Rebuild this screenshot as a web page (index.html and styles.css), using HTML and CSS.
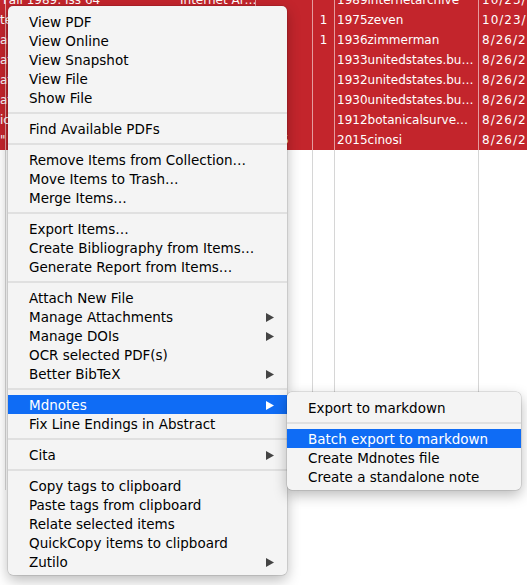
FILE: index.html
```html
<!DOCTYPE html>
<html>
<head>
<meta charset="utf-8">
<link rel="stylesheet" href="styles.css">
</head>
<body>
<div class="table">
  <div class="row sel"><div class="c ca">Fall 1989: Iss 64</div><div class="c cb"></div><div class="c cc">Internet Ar…</div><div class="c cd"></div><div class="c ce"></div><div class="c cf">1989internetarchive</div><div class="c cg">10/23/2020</div></div>
  <div class="row sel"><div class="c ca">tenth</div><div class="c cb"></div><div class="c cc"></div><div class="c cd"></div><div class="c ce">1</div><div class="c cf">1975zeven</div><div class="c cg">10/23/2020</div></div>
  <div class="row sel"><div class="c ca">arbor</div><div class="c cb"></div><div class="c cc"></div><div class="c cd"></div><div class="c ce">1</div><div class="c cf">1936zimmerman</div><div class="c cg">8/26/2020</div></div>
  <div class="row sel"><div class="c ca">atlas</div><div class="c cb"></div><div class="c cc"></div><div class="c cd"></div><div class="c ce"></div><div class="c cf">1933unitedstates.bu…</div><div class="c cg">8/26/2020</div></div>
  <div class="row sel"><div class="c ca">atlas</div><div class="c cb"></div><div class="c cc"></div><div class="c cd"></div><div class="c ce"></div><div class="c cf">1932unitedstates.bu…</div><div class="c cg">8/26/2020</div></div>
  <div class="row sel"><div class="c ca">atlas</div><div class="c cb"></div><div class="c cc"></div><div class="c cd"></div><div class="c ce"></div><div class="c cf">1930unitedstates.bu…</div><div class="c cg">8/26/2020</div></div>
  <div class="row sel"><div class="c ca">icones</div><div class="c cb"></div><div class="c cc"></div><div class="c cd"></div><div class="c ce"></div><div class="c cf">1912botanicalsurve…</div><div class="c cg">8/26/2020</div></div>
  <div class="row sel"><div class="c ca">"</div><div class="c cb"></div><div class="c cc"></div><div class="c cd tail">2015</div><div class="c ce"></div><div class="c cf">2015cinosi</div><div class="c cg">8/26/2020</div></div>
  <div class="row"><div class="c ca"></div><div class="c cb"></div><div class="c cc"></div><div class="c cd"></div><div class="c ce"></div><div class="c cf"></div><div class="c cg"></div></div>
  <div class="row"><div class="c ca"></div><div class="c cb"></div><div class="c cc"></div><div class="c cd"></div><div class="c ce"></div><div class="c cf"></div><div class="c cg"></div></div>
  <div class="row"><div class="c ca"></div><div class="c cb"></div><div class="c cc"></div><div class="c cd"></div><div class="c ce"></div><div class="c cf"></div><div class="c cg"></div></div>
  <div class="row"><div class="c ca"></div><div class="c cb"></div><div class="c cc"></div><div class="c cd"></div><div class="c ce"></div><div class="c cf"></div><div class="c cg"></div></div>
  <div class="row"><div class="c ca"></div><div class="c cb"></div><div class="c cc"></div><div class="c cd"></div><div class="c ce"></div><div class="c cf"></div><div class="c cg"></div></div>
  <div class="row"><div class="c ca"></div><div class="c cb"></div><div class="c cc"></div><div class="c cd"></div><div class="c ce"></div><div class="c cf"></div><div class="c cg"></div></div>
  <div class="row"><div class="c ca"></div><div class="c cb"></div><div class="c cc"></div><div class="c cd"></div><div class="c ce"></div><div class="c cf"></div><div class="c cg"></div></div>
  <div class="row"><div class="c ca"></div><div class="c cb"></div><div class="c cc"></div><div class="c cd"></div><div class="c ce"></div><div class="c cf"></div><div class="c cg"></div></div>
  <div class="row"><div class="c ca"></div><div class="c cb"></div><div class="c cc"></div><div class="c cd"></div><div class="c ce"></div><div class="c cf"></div><div class="c cg"></div></div>
  <div class="row"><div class="c ca"></div><div class="c cb"></div><div class="c cc"></div><div class="c cd"></div><div class="c ce"></div><div class="c cf"></div><div class="c cg"></div></div>
  <div class="row"><div class="c ca"></div><div class="c cb"></div><div class="c cc"></div><div class="c cd"></div><div class="c ce"></div><div class="c cf"></div><div class="c cg"></div></div>
  <div class="row"><div class="c ca"></div><div class="c cb"></div><div class="c cc"></div><div class="c cd"></div><div class="c ce"></div><div class="c cf"></div><div class="c cg"></div></div>
  <div class="row"><div class="c ca"></div><div class="c cb"></div><div class="c cc"></div><div class="c cd"></div><div class="c ce"></div><div class="c cf"></div><div class="c cg"></div></div>
  <div class="row"><div class="c ca"></div><div class="c cb"></div><div class="c cc"></div><div class="c cd"></div><div class="c ce"></div><div class="c cf"></div><div class="c cg"></div></div>
  <div class="row"><div class="c ca"></div><div class="c cb"></div><div class="c cc"></div><div class="c cd"></div><div class="c ce"></div><div class="c cf"></div><div class="c cg"></div></div>
  <div class="row"><div class="c ca"></div><div class="c cb"></div><div class="c cc"></div><div class="c cd"></div><div class="c ce"></div><div class="c cf"></div><div class="c cg"></div></div>
  <div class="row"><div class="c ca"></div><div class="c cb"></div><div class="c cc"></div><div class="c cd"></div><div class="c ce"></div><div class="c cf"></div><div class="c cg"></div></div>
</div>

<div class="menu main">
  <div class="item">View PDF</div>
  <div class="item">View Online</div>
  <div class="item">View Snapshot</div>
  <div class="item">View File</div>
  <div class="item">Show File</div>
  <div class="sep"></div>
  <div class="item">Find Available PDFs</div>
  <div class="sep"></div>
  <div class="item">Remove Items from Collection…</div>
  <div class="item">Move Items to Trash…</div>
  <div class="item">Merge Items…</div>
  <div class="sep"></div>
  <div class="item">Export Items…</div>
  <div class="item">Create Bibliography from Items…</div>
  <div class="item">Generate Report from Items…</div>
  <div class="sep"></div>
  <div class="item">Attach New File</div>
  <div class="item">Manage Attachments<svg class="arrow" viewBox="0 0 8 9"><polygon points="0,0 8,4.5 0,9"/></svg></div>
  <div class="item">Manage DOIs<svg class="arrow" viewBox="0 0 8 9"><polygon points="0,0 8,4.5 0,9"/></svg></div>
  <div class="item">OCR selected PDF(s)</div>
  <div class="item">Better BibTeX<svg class="arrow" viewBox="0 0 8 9"><polygon points="0,0 8,4.5 0,9"/></svg></div>
  <div class="sep"></div>
  <div class="item active">Mdnotes<svg class="arrow" viewBox="0 0 8 9"><polygon points="0,0 8,4.5 0,9"/></svg></div>
  <div class="item">Fix Line Endings in Abstract</div>
  <div class="sep"></div>
  <div class="item">Cita<svg class="arrow" viewBox="0 0 8 9"><polygon points="0,0 8,4.5 0,9"/></svg></div>
  <div class="sep"></div>
  <div class="item">Copy tags to clipboard</div>
  <div class="item">Paste tags from clipboard</div>
  <div class="item">Relate selected items</div>
  <div class="item">QuickCopy items to clipboard</div>
  <div class="item">Zutilo<svg class="arrow" viewBox="0 0 8 9"><polygon points="0,0 8,4.5 0,9"/></svg></div>
</div>

<div class="menu sub">
  <div class="item">Export to markdown</div>
  <div class="sep"></div>
  <div class="item active">Batch export to markdown</div>
  <div class="item">Create Mdnotes file</div>
  <div class="item">Create a standalone note</div>
</div>
</body>
</html>
```

FILE: styles.css
```css
html, body {
  margin: 0;
  padding: 0;
  background: #ffffff;
  overflow: hidden;
}
body {
  width: 527px;
  height: 585px;
  position: relative;
  font-family: "DejaVu Sans", "Liberation Sans", sans-serif;
}
.table {
  margin-top: -10px;
  display: flex;
  flex-direction: column;
}
.row {
  display: flex;
  height: 20px;
  flex-shrink: 0;
}
.row.sel {
  background: #c3252c;
  color: #ffffff;
}
.c {
  flex-shrink: 0;
  box-sizing: border-box;
  height: 20px;
  line-height: 20px;
  font-size: 12px;
  white-space: nowrap;
  overflow: hidden;
  border-right: 1px solid #d6d6d6;
  padding-left: 2px;
}
.row.sel .c {
  border-right-color: rgba(255, 255, 255, 0.55);
}
.ca { width: 6px; overflow: visible; padding-left: 2px; }
.row.sel .ca { padding-left: 0; }
.row.sel:first-child .ca { padding-left: 3px; }
.cb { width: 172px; border-right: none; }
.cc { width: 78px; }
.cd { width: 57px; text-align: right; padding-right: 23px; }
.ce { width: 22px; text-align: center; padding-left: 0; }
.cf { width: 144px; }
.cg { flex: 1; border-right: none; padding-left: 3px; letter-spacing: 1px; }

.menu {
  position: absolute;
  background: #f4f4f4;
  border-radius: 5px;
  box-shadow: 0 0 0 0.5px rgba(0, 0, 0, 0.18), 0 5px 14px rgba(0, 0, 0, 0.28);
  display: flex;
  flex-direction: column;
  padding: 6px 0 4px;
  color: #000000;
  font-size: 13.5px;
}
.main {
  left: 8px;
  top: 6px;
  width: 279px;
}
.sub {
  left: 287px;
  top: 392px;
  width: 234px;
}
.item {
  box-sizing: border-box;
  height: 19px;
  line-height: 17px;
  padding: 2px 13px 0 21px;
  display: flex;
  justify-content: space-between;
  align-items: center;
  white-space: nowrap;
}
.item.active {
  background: #0f6cf5;
  color: #ffffff;
}
.arrow {
  width: 8px;
  height: 9px;
  fill: #444444;
}
.item.active .arrow {
  fill: #ffffff;
}
.sep {
  height: 12px;
  display: flex;
  align-items: center;
}
.sep::before {
  content: "";
  flex: 1;
  height: 2px;
  background: #e0e0e0;
}
```
